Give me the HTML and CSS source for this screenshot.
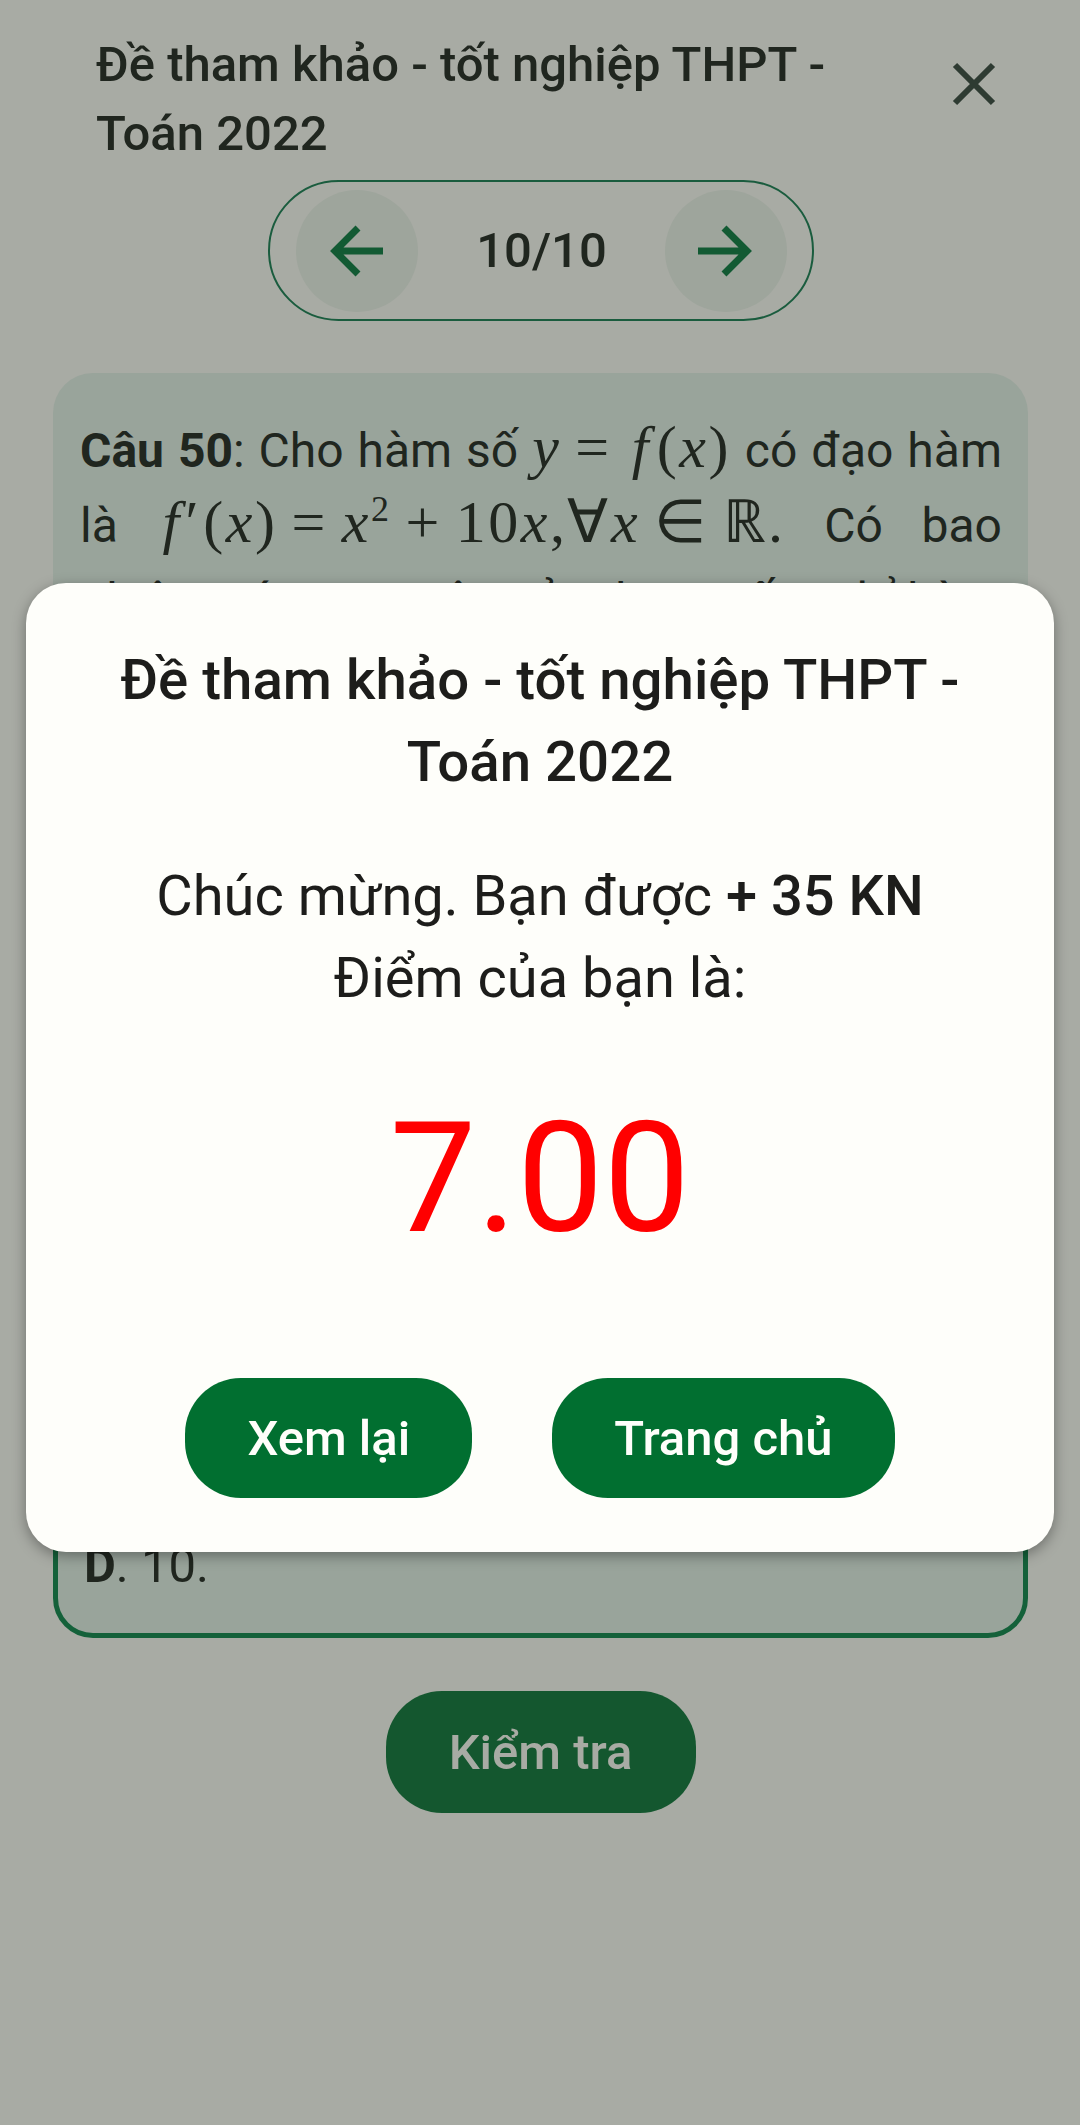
FILE: index.html
```html
<!DOCTYPE html>
<html>
  <head>
    <meta charset="utf-8">
    <title>Đề tham khảo - tốt nghiệp THPT - Toán 2022</title>
    <link rel="stylesheet" href="styles.css">
  </head>
  <body>
    <div class="page">
      <!-- thanh tiêu đề -->
      <div class="header">
        <div class="header-title">Đề tham khảo - tốt nghiệp THPT - Toán 2022</div>
        <svg class="close-icon" viewBox="0 0 44 44">
          <path d="M3 3L41 41M41 3L3 41"></path>
        </svg>
      </div>
      <!-- chuyển câu hỏi -->
      <div class="pager">
        <div class="pager-btn">
          <svg viewBox="0 0 56 52"><path d="M54 26H7M29 3L6 26L29 49"></path></svg>
        </div>
        <div class="pager-count">10/10</div>
        <div class="pager-btn">
          <svg viewBox="0 0 56 52"><path d="M0 26H49M26 3L49 26L26 49"></path></svg>
        </div>
      </div>
      <div class="question">
        <p class="question-line"><b>Câu 50</b>: Cho hàm số <span class="math"><i>y</i><span class="rel">=</span><i class="fn">f</i>(<i>x</i>)</span> có đạo hàm</p>
        <p class="question-line">là <span class="math"><i class="fn">f′</i>(<i>x</i>)<span class="rel">=</span><i>x</i><sup>2</sup><span class="rel">+</span>10<i>x</i>,∀<i>x</i><span class="rel">∈</span>ℝ.</span> Có bao</p>
        <p class="question-line">nhiêu giá trị nguyên của tham số <i>m</i> để hàm</p>
      </div>
      <div class="option-d"><span><b>D</b>. 10.</span></div>
      <div class="check-btn">Kiểm tra</div>
    </div>

    <!-- lớp phủ + hộp kết quả -->
    <div class="overlay">
      <div class="dialog">
        <div class="dialog-title">Đề tham khảo - tốt nghiệp THPT - Toán 2022</div>
        <div class="dialog-msg">Chúc mừng. Bạn được <b>+ 35 KN</b><br>Điểm của bạn là:</div>
        <div class="dialog-score">7.00</div>
        <div class="dialog-actions">
          <div class="dialog-btn">Xem lại</div>
          <div class="dialog-btn">Trang chủ</div>
        </div>
      </div>
    </div>
  </body>
</html>
```

FILE: styles.css
```css
html, body {
  margin: 0;
  height: 2125px;
  overflow: hidden;
}
body {
  position: relative;
  background: #a8aba4;
  color: #20261f;
  font-family: Roboto, "Noto Sans", sans-serif;
}
.page {
  display: flex;
  flex-direction: column;
  align-items: center;
  box-sizing: border-box;
  padding: 30px 52px 0 53px;
}
/* tiêu đề */
.header {
  align-self: stretch;
  display: flex;
  justify-content: space-between;
  align-items: flex-start;
  padding-left: 43px;
  box-sizing: border-box;
  height: 150px;
}
.header-title {
  width: 770px;
  font-size: 49px;
  font-weight: 500;
  line-height: 69px;
}
.close-icon {
  width: 44px;
  height: 44px;
  margin: 32px 32px 0 0;
  fill: none;
  stroke: #2e3b32;
  stroke-width: 6;
}
/* chuyển câu */
.pager {
  display: flex;
  align-items: center;
  justify-content: space-between;
  box-sizing: border-box;
  width: 546px;
  height: 141px;
  padding: 0 24px 0 26px;
  border: 2.5px solid #1a5c3e;
  border-radius: 71px;
}
.pager-btn {
  display: flex;
  align-items: center;
  justify-content: center;
  width: 122px;
  height: 122px;
  border-radius: 50%;
  background: #9ea59c;
}
.pager-btn svg {
  width: 56px;
  height: 52px;
  fill: none;
  stroke: #125a33;
  stroke-width: 7;
}
.pager-count {
  font-size: 49px;
  font-weight: 500;
}
/* câu hỏi */
.question {
  align-self: stretch;
  box-sizing: border-box;
  height: 900px;
  margin-top: 52px;
  padding: 40px 26px 0 27px;
  background: #99a49b;
  border-radius: 40px;
  font-size: 48px;
  line-height: 75px;
}
.question-line {
  margin: 0;
  text-align: justify;
  text-align-last: justify;
  white-space: nowrap;
}
.math {
  font-family: "Liberation Serif", serif;
  font-size: 60px;
  letter-spacing: 2.5px;
  line-height: 0;
}
.math sup {
  font-size: 36px;
  line-height: 0;
}
.rel {
  margin: 0 14px;
}
.fn {
  margin: 0 6px;
}
.option-d {
  align-self: stretch;
  display: flex;
  align-items: flex-end;
  box-sizing: border-box;
  height: 338px;
  margin-top: 27px;
  padding: 0 26px 41px;
  background: #99a49b;
  border: 5px solid #14613a;
  border-radius: 40px;
  font-size: 49px;
  line-height: 52px;
}
.option-d b {
  font-weight: 700;
}
.check-btn {
  display: flex;
  align-items: center;
  justify-content: center;
  width: 310px;
  height: 122px;
  margin-top: 53px;
  border-radius: 56px;
  background: #14572f;
  color: #a8aba4;
  font-size: 49px;
  font-weight: 500;
}
/* hộp kết quả */
.overlay {
  position: absolute;
  top: 583px;
  left: 26px;
  right: 26px;
}
.dialog {
  display: flex;
  flex-direction: column;
  align-items: center;
  box-sizing: border-box;
  height: 969px;
  padding: 56px 60px 0;
  background: #fefefa;
  border-radius: 40px;
  box-shadow: 0 4px 14px rgba(0, 0, 0, 0.35);
  color: #1d1d1b;
  text-align: center;
}
.dialog-title {
  font-size: 56.4px;
  font-weight: 500;
  line-height: 82px;
}
.dialog-msg {
  margin-top: 52px;
  font-size: 56px;
  line-height: 82px;
}
.dialog-msg b {
  font-weight: 500;
}
.dialog-score {
  margin-top: 72px;
  color: #ff0000;
  font-size: 154px;
  line-height: 176px;
}
.dialog-actions {
  display: flex;
  gap: 80px;
  margin-top: 111px;
}
.dialog-btn {
  display: flex;
  align-items: center;
  justify-content: center;
  height: 120px;
  padding: 0 62px;
  border-radius: 56px;
  background: #016f30;
  color: #fefefa;
  font-size: 49px;
  font-weight: 500;
}
```
